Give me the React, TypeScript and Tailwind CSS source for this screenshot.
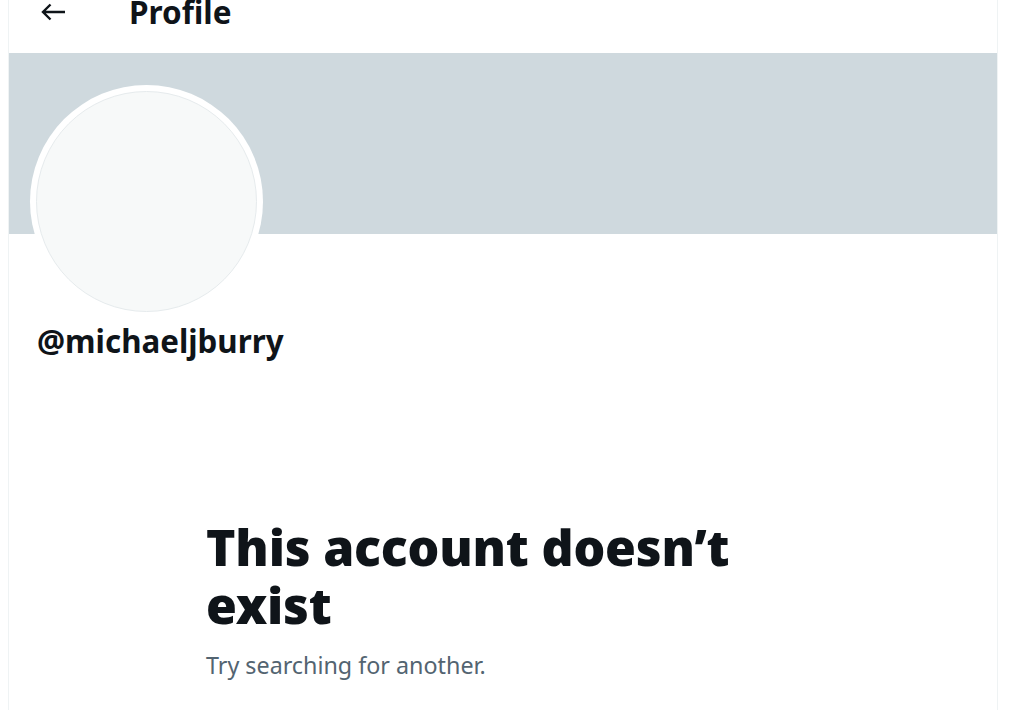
import React from 'react'

const font = '"Noto Sans", "Open Sans", Arial, sans-serif'

function BackArrow() {
  return (
    <svg width="26" height="18" viewBox="0 0 26 18" fill="none" className="text-[#0f1419]">
      <path d="M2 9h22M9.5 1.5L2 9l7.5 7.5" stroke="currentColor" strokeWidth="2.4" strokeLinecap="butt" strokeLinejoin="miter" />
    </svg>
  )
}

export default function App() {
  return (
    <div className="min-h-screen w-full bg-white overflow-hidden" style={{ fontFamily: font }}>
      <div className="ml-[8px] w-[990px] min-h-[710px] border-x border-[#eff3f4] flex flex-col">
        {/* header, scrolled so the top is cut off */}
        <div className="h-[53px] flex items-start">
          <div className="ml-[32px] mt-[3px]">
            <BackArrow />
          </div>
          <h2 className="ml-[62px] -mt-[6px] text-[31.5px] leading-[36px] font-bold text-[#0f1419]">Profile</h2>
        </div>

        {/* banner */}
        <div className="h-[181px] bg-[#cfd9de]" />

        {/* avatar + handle */}
        <div className="px-[21px]">
          <div className="-mt-[149px] w-[233px] h-[233px] rounded-full bg-white p-[6px]">
            <div className="w-full h-full rounded-full bg-[#f7f9f9] border border-[#e6ebed]" />
          </div>
          <div className="mt-[5px] ml-[7px] text-[31.3px] leading-[36px] font-bold text-[#0f1419]">@michaeljburry</div>
        </div>

        {/* empty state */}
        <div className="mt-[159px] ml-[197px] w-[580px]">
          <h1 className="text-[50px] leading-[58px] font-black text-[#0f1419] tracking-[-0.2px]">This account doesn’t exist</h1>
          <p className="mt-[16px] text-[23.3px] leading-[30px] text-[#536471]">Try searching for another.</p>
        </div>
      </div>
    </div>
  )
}
